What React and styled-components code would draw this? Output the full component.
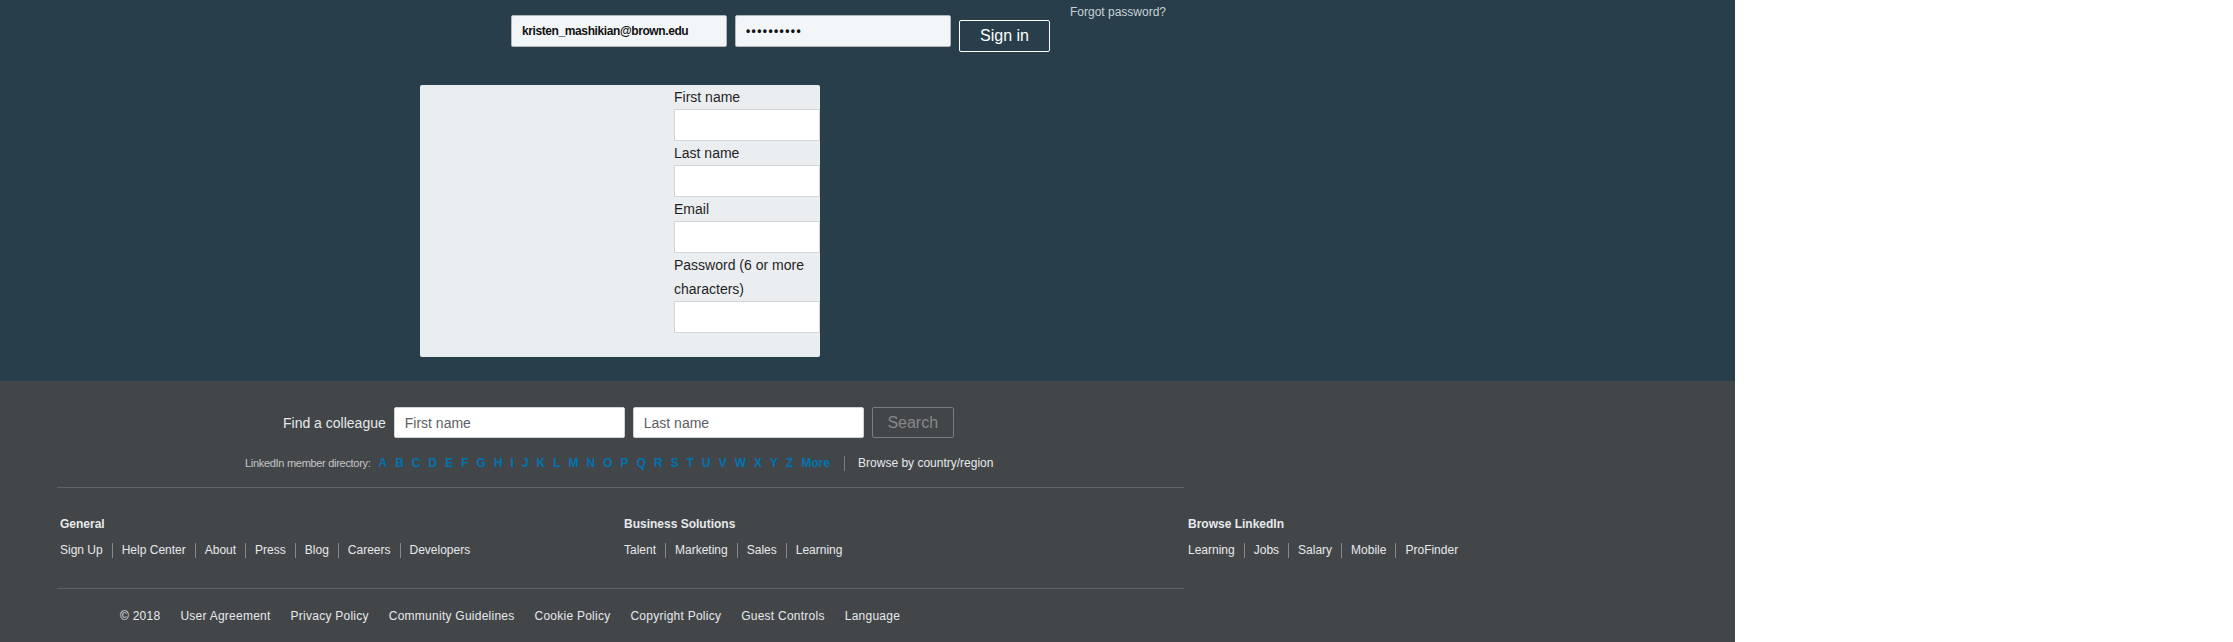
import React from "react";
import styled, { createGlobalStyle } from "styled-components";

const letters = "ABCDEFGHIJKLMNOPQRSTUVWXYZ".split("");

const columns = [
    { title: "General", links: ["Sign Up", "Help Center", "About", "Press", "Blog", "Careers", "Developers"] },
    { title: "Business Solutions", links: ["Talent", "Marketing", "Sales", "Learning"] },
    { title: "Browse LinkedIn", links: ["Learning", "Jobs", "Salary", "Mobile", "ProFinder"] },
];

const legal = ["© 2018", "User Agreement", "Privacy Policy", "Community Guidelines", "Cookie Policy", "Copyright Policy", "Guest Controls", "Language"];

const signupFields = ["First name", "Last name", "Email", "Password (6 or more characters)"];

export default function App() {
    return (
        <Page>
            <GlobalStyle />
            <Header>
                <TopRow>
                    <LoginInput type="text" defaultValue="kristen_mashikian@brown.edu" readOnly />
                    <LoginInput type="password" defaultValue="abcdefghij" readOnly $dots />
                    <SignIn type="button">Sign in</SignIn>
                    <Forgot href="#">Forgot password?</Forgot>
                </TopRow>
                <Card>
                    <div />
                    <FormCol>
                        {signupFields.map((f) => (
                            <React.Fragment key={f}>
                                <FieldLabel>{f}</FieldLabel>
                                <Field type="text" />
                            </React.Fragment>
                        ))}
                    </FormCol>
                </Card>
            </Header>

            <Footer>
                <SearchRow>
                    <FindLabel>Find a colleague</FindLabel>
                    <SearchInput placeholder="First name" />
                    <SearchInput placeholder="Last name" />
                    <SearchButton type="button">Search</SearchButton>
                </SearchRow>

                <DirRow>
                    <DirLabel>LinkedIn member directory:</DirLabel>
                    <Letters>
                        {letters.map((l) => (
                            <Letter key={l} href="#">{l}</Letter>
                        ))}
                        <Letter href="#">More</Letter>
                    </Letters>
                    <DirSep />
                    <BrowseLink href="#">Browse by country/region</BrowseLink>
                </DirRow>

                <Divider />

                <Columns>
                    {columns.map((c) => (
                        <div key={c.title}>
                            <ColTitle>{c.title}</ColTitle>
                            <LinkList>
                                {c.links.map((l) => (
                                    <LinkItem key={l} href="#">{l}</LinkItem>
                                ))}
                            </LinkList>
                        </div>
                    ))}
                </Columns>

                <Divider $top={30} />

                <LegalRow>
                    {legal.map((l) => (
                        <LegalItem key={l}>{l}</LegalItem>
                    ))}
                </LegalRow>
            </Footer>
        </Page>
    );
}

// ::::::::::Styled-Components::::::::::
const GlobalStyle = createGlobalStyle`
    body {
        margin: 0;
        background: #fff;
        font-family: "Liberation Sans", Arial, sans-serif;
    }
    * {
        box-sizing: border-box;
    }
    a {
        text-decoration: none;
    }
`;

const Page = styled.div`
    width: 1735px;
`;

const Header = styled.header`
    background: #283e4a;
    height: 381px;
    display: flex;
    flex-direction: column;
`;

const TopRow = styled.div`
    display: flex;
    align-items: flex-start;
    gap: 8px;
    height: 52px;
    padding-left: 511px;
`;

const LoginInput = styled.input`
    width: 216px;
    height: 32px;
    margin-top: 15px;
    padding: 0 10px;
    background: #f3f6f8;
    border: 1px solid #b3b6b9;
    border-radius: 2px;
    font-family: "Liberation Sans", Arial, sans-serif;
    font-size: 12px;
    font-weight: 700;
    letter-spacing: ${(p) => (p.$dots ? "1.4px" : "-0.4px")};
    color: #111;
    outline: none;
`;

const SignIn = styled.button`
    width: 91px;
    height: 32px;
    margin-top: 20px;
    background: transparent;
    border: 1px solid #fff;
    border-radius: 2px;
    color: #fff;
    font-family: "Liberation Sans", Arial, sans-serif;
    font-size: 16px;
`;

const Forgot = styled.a`
    margin: 4px 0 0 12px;
    font-size: 12px;
    line-height: 16px;
    color: #c9d1d6;
`;

const Card = styled.div`
    width: 400px;
    height: 272px;
    margin: 33px 0 0 420px;
    background: #ebeef1;
    border-radius: 2px;
    display: grid;
    grid-template-columns: 254px 146px;
    overflow: hidden;
`;

const FormCol = styled.div`
    display: flex;
    flex-direction: column;
`;

const FieldLabel = styled.label`
    font-size: 14px;
    line-height: 24px;
    color: #1f1f1f;
`;

const Field = styled.input`
    width: 146px;
    height: 32px;
    background: #fff;
    border: 1px solid #d3d6d9;
    border-radius: 0;
    outline: none;
`;

const Footer = styled.footer`
    background: #434649;
    min-height: 261px;
    padding: 26px 0 22px 57px;
    color: #e6e9ec;
`;

const SearchRow = styled.div`
    display: flex;
    align-items: center;
    gap: 8px;
    margin-left: 226px;
`;

const FindLabel = styled.span`
    font-size: 14px;
    color: #e6e9ec;
`;

const SearchInput = styled.input`
    width: 231px;
    height: 31px;
    padding: 0 10px;
    background: #fff;
    border: 1px solid #d0d3d6;
    border-radius: 2px;
    font-family: "Liberation Sans", Arial, sans-serif;
    font-size: 14px;
    outline: none;
    &::placeholder {
        color: #5d6064;
    }
`;

const SearchButton = styled.button`
    width: 82px;
    height: 31px;
    background: transparent;
    border: 1px solid #7b7e81;
    border-radius: 2px;
    color: #86898c;
    font-family: "Liberation Sans", Arial, sans-serif;
    font-size: 16px;
`;

const DirRow = styled.div`
    display: flex;
    align-items: center;
    height: 16px;
    margin: 17px 0 0 188px;
`;

const DirLabel = styled.span`
    font-size: 11px;
    letter-spacing: -0.3px;
    color: #c4c7ca;
`;

const Letters = styled.div`
    display: flex;
    gap: 8px;
    margin-left: 8px;
`;

const Letter = styled.a`
    font-size: 12px;
    font-weight: 700;
    color: #0073b1;
`;

const DirSep = styled.span`
    width: 1px;
    height: 15px;
    margin: 0 13px 0 14px;
    background: #7b7e81;
`;

const BrowseLink = styled.a`
    font-size: 12px;
    color: #e6e9ec;
`;

const Divider = styled.hr`
    width: 1127px;
    height: 1px;
    margin: ${(p) => p.$top || 16}px 0 0;
    border: none;
    background: #5f6265;
`;

const Columns = styled.div`
    display: grid;
    grid-template-columns: repeat(3, 564px);
    margin: 28px 0 0 3px;
`;

const ColTitle = styled.h4`
    margin: 0;
    font-size: 12px;
    line-height: 16px;
    font-weight: 700;
    color: #e6e9ec;
`;

const LinkList = styled.div`
    display: flex;
    margin-top: 11px;
`;

const LinkItem = styled.a`
    font-size: 12px;
    line-height: 15px;
    color: #e6e9ec;
    padding: 0 9px;
    border-left: 1px solid #86898c;
    &:first-child {
        padding-left: 0;
        border-left: none;
    }
`;

const LegalRow = styled.div`
    display: flex;
    gap: 20px;
    margin: 19px 0 0 63px;
`;

const LegalItem = styled.span`
    font-size: 12px;
    line-height: 16px;
    letter-spacing: 0.25px;
    color: #e6e9ec;
`;
